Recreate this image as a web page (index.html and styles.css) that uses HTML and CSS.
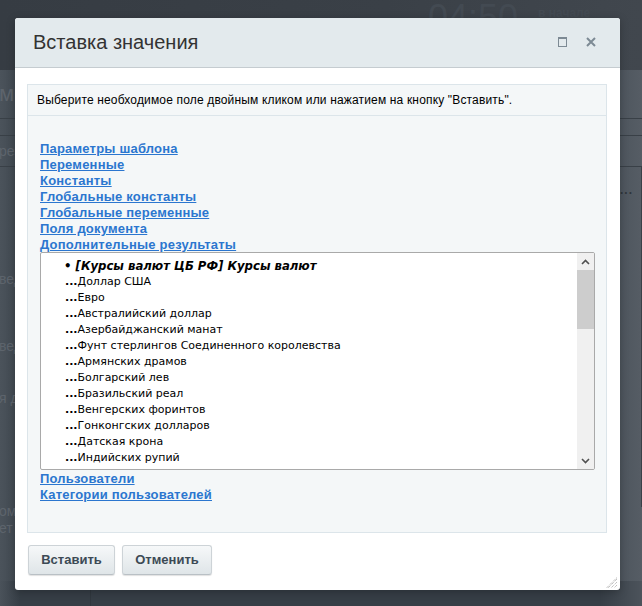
FILE: index.html
```html
<!DOCTYPE html>
<html lang="ru">
<head>
<meta charset="utf-8">
<title>Вставка значения</title>
<link rel="stylesheet" href="styles.css">
</head>
<body>
<div class="bg">
  <div class="bg-top"><span class="bg-clock">04:50</span><span class="bg-begin">в начале</span></div>
  <div class="bg-row r1 lineall"><span class="bg-text big">ме</span></div>
  <div class="bg-row r2 lineall"></div>
  <div class="bg-row r3 lineall"><span class="bg-text">рез</span></div>
  <div class="bg-row r4 lineright"><span class="bg-dots">...</span></div>
  <div class="bg-row r5 lineright"></div>
  <div class="bg-row r6 lineright"></div>
  <div class="bg-row r7 lineright"><span class="bg-text top">вед</span></div>
  <div class="bg-row r8 lineright"></div>
  <div class="bg-row r9 lineright"><span class="bg-text">вед</span></div>
  <div class="bg-row r10 lineright"></div>
  <div class="bg-row r11 lineright"><span class="bg-text top">я д</span></div>
  <div class="bg-row r12 lineright"></div>
  <div class="bg-row r13"><span class="bg-text top two">омл<br>ет</span></div>
  <div class="bg-bottom"><div class="bg-col"></div></div>
</div>

<div class="dialog">
  <div class="dlg-head">
    <span class="dlg-title">Вставка значения</span>
    <span class="dlg-icons">
      <span class="ico-max"></span>
      <svg class="ico-close" width="10" height="10" viewBox="0 0 10 10"><path d="M1 1 L9 9 M9 1 L1 9" stroke="#7d8a94" stroke-width="2" fill="none"/></svg>
    </span>
  </div>
  <div class="dlg-body">
    <div class="box">
      <div class="hint">Выберите необходимое поле двойным кликом или нажатием на кнопку "Вставить".</div>
      <div class="links">
        <a href="#" class="lnk">Параметры шаблона</a>
        <a href="#" class="lnk">Переменные</a>
        <a href="#" class="lnk">Константы</a>
        <a href="#" class="lnk">Глобальные константы</a>
        <a href="#" class="lnk">Глобальные переменные</a>
        <a href="#" class="lnk">Поля документа</a>
        <a href="#" class="lnk">Дополнительные результаты</a>
        <div class="listbox">
          <div class="list">
            <div class="item head">• [Курсы валют ЦБ РФ] Курсы валют</div>
            <div class="item"><b>...</b>Доллар США</div>
            <div class="item"><b>...</b>Евро</div>
            <div class="item"><b>...</b>Австралийский доллар</div>
            <div class="item"><b>...</b>Азербайджанский манат</div>
            <div class="item"><b>...</b>Фунт стерлингов Соединенного королевства</div>
            <div class="item"><b>...</b>Армянских драмов</div>
            <div class="item"><b>...</b>Болгарский лев</div>
            <div class="item"><b>...</b>Бразильский реал</div>
            <div class="item"><b>...</b>Венгерских форинтов</div>
            <div class="item"><b>...</b>Гонконгских долларов</div>
            <div class="item"><b>...</b>Датская крона</div>
            <div class="item"><b>...</b>Индийских рупий</div>
          </div>
          <div class="sbar">
            <div class="sb-arrow"><svg width="9" height="6" viewBox="0 0 9 6"><path d="M1 5 L4.5 1.5 L8 5" stroke="#505050" stroke-width="1.6" fill="none"/></svg></div>
            <div class="sb-thumb"></div>
            <div class="sb-track"></div>
            <div class="sb-arrow"><svg width="9" height="6" viewBox="0 0 9 6"><path d="M1 1 L4.5 4.5 L8 1" stroke="#505050" stroke-width="1.6" fill="none"/></svg></div>
          </div>
        </div>
        <a href="#" class="lnk">Пользователи</a>
        <a href="#" class="lnk">Категории пользователей</a>
      </div>
    </div>
    <div class="buttons">
      <button class="btn b1">Вставить</button>
      <button class="btn b2">Отменить</button>
    </div>
  </div>
  <svg class="grip" width="12" height="12" viewBox="0 0 12 12"><path d="M11 2 L2 11 M11 5 L5 11 M11 8 L8 11 M11 0.5 L0.5 11" stroke="#a8a8a8" stroke-width="1" fill="none" stroke-dasharray="1 1"/></svg>
</div>
</body>
</html>
```

FILE: styles.css
```css
html, body {
  margin: 0;
  padding: 0;
}
body {
  width: 642px;
  height: 606px;
  overflow: hidden;
  font-family: "Liberation Sans", Arial, sans-serif;
  position: relative;
}
.bg {
  height: 606px;
  display: flex;
  flex-direction: column;
  background: linear-gradient(to right, #4b535b 0px, #3f474f 20px, #3f474f 560px, #4a525a 610px, #565d65 642px);
}
.bg-top {
  height: 70px;
  flex: none;
  background: linear-gradient(to right, #363c43, #3a4047 60%, #41474e);
  display: flex;
  align-items: flex-start;
  padding-left: 428px;
  color: #434a52;
}
.bg-clock {
  font-size: 36px;
  line-height: 36px;
  margin-top: 0px;
  font-weight: 300;
}
.bg-begin {
  font-size: 12px;
  font-weight: bold;
  margin-left: 20px;
  margin-top: 6px;
}
.bg-row {
  flex: none;
  display: flex;
  align-items: center;
  position: relative;
}
.lineall { border-bottom: 1px solid #394047; }
.lineright { box-shadow: inset -22px -1px 0 -21px #394047; }
.r1 { height: 48px; }
.r2 { height: 16px; }
.r3 { height: 30px; }
.r4 { height: 45px; }
.r5 { height: 19px; }
.r6 { height: 34px; }
.r7 { height: 44px; }
.r8 { height: 15px; }
.r9 { height: 43px; }
.r10 { height: 17px; }
.r11 { height: 91px; }
.r12 { height: 32px; }
.r13 { height: 74px; }
.bg-text {
  color: #5d646c;
  font-size: 14px;
  font-family: "Liberation Sans", Arial, sans-serif;
  margin-left: -1px;
}
.bg-text.big { font-size: 22px; }
.bg-text.top { align-self: flex-start; margin-top: 6px; }
.bg-text.two { line-height: 17px; margin-top: -4px; }
.bg-dots {
  margin-left: 620px;
  color: #2f353b;
  font-size: 12px;
  font-weight: bold;
  letter-spacing: 1px;
}
.bg-bottom {
  flex: 1;
  background: linear-gradient(to right, #4a525a 0px, #363e46 20px, #363e46 600px, #4c535b 642px);
  display: flex;
}
.bg-col {
  width: 90px;
  border-right: 1px solid #30373e;
}

/* dialog */
.dialog {
  position: absolute;
  left: 15px;
  top: 18px;
  width: 605px;
  height: 572px;
  background: #fff;
  border-radius: 3px;
  display: flex;
  flex-direction: column;
  box-shadow: 0 2px 8px rgba(0,0,0,0.25);
}
.dlg-head {
  height: 49px;
  flex: none;
  background: #e3eaed;
  border-bottom: 1px solid #c5ccd0;
  border-radius: 3px 3px 0 0;
  display: flex;
  align-items: center;
  padding-left: 18px;
  padding-right: 24px;
}
.dlg-title {
  font-size: 20px;
  color: #333;
  flex: 1;
  margin-top: -1px;
}
.dlg-icons {
  display: flex;
  align-items: center;
  gap: 19px;
}
.ico-max {
  width: 7px;
  height: 7px;
  border: 1px solid #7d8a94;
  border-top-width: 2px;
  margin-top: -1px;
}
.ico-close { display: block; margin-top: -1px; }

.dlg-body {
  flex: 1;
  padding: 16px 13px 0 12px;
  display: flex;
  flex-direction: column;
}
.box {
  border: 1px solid #dce5ea;
  background: #f4f7f8;
}
.hint {
  height: 30px;
  border-bottom: 1px solid #dce5ea;
  font-size: 12px;
  letter-spacing: 0.16px;
  color: #000;
  line-height: 30px;
  padding-left: 9px;
}
.links {
  padding: 24px 11px 30px 12px;
  display: flex;
  flex-direction: column;
  align-items: flex-start;
}
.lnk {
  font-size: 13px;
  font-weight: bold;
  letter-spacing: 0.2px;
  color: #2b76cf;
  text-decoration: underline;
  line-height: 18px;
  height: 16px;
}
.listbox {
  align-self: stretch;
  height: 216px;
  border: 1px solid #a9a9a9;
  border-radius: 2px;
  background: #fff;
  display: flex;
  overflow: hidden;
}
.list {
  flex: 1;
  padding: 5px 0 0 24px;
  overflow: hidden;
  font-family: "DejaVu Sans", Verdana, sans-serif;
  font-size: 11px;
  color: #000;
}
.item {
  height: 16px;
  line-height: 16px;
  white-space: nowrap;
}
.item b { font-weight: bold; }
.item.head {
  font-weight: bold;
  font-style: italic;
  font-size: 11.7px;
  margin-left: -1px;
}
.sbar {
  width: 17px;
  flex: none;
  background: #f0f0f0;
  display: flex;
  flex-direction: column;
}
.sb-arrow {
  height: 17px;
  display: flex;
  align-items: center;
  justify-content: center;
}
.sb-thumb {
  height: 59px;
  background: #cdcdcd;
}
.sb-track { flex: 1; }

.buttons {
  display: flex;
  gap: 7px;
  margin-top: 12px;
  padding-left: 1px;
}
.btn {
  height: 30px;
  border: 1px solid #cdd3d7;
  border-bottom-color: #b9c0c5;
  border-radius: 3px;
  background: linear-gradient(to bottom, #f6f8f9, #dfe5e8);
  box-shadow: 0 1px 1px rgba(0,0,0,0.12);
  font-family: "Liberation Sans", Arial, sans-serif;
  font-size: 13px;
  font-weight: bold;
  color: #3c4a55;
  padding: 0 0 1px 0;
  cursor: pointer;
}
.b1 { width: 87px; }
.b2 { width: 90px; }
.grip {
  position: absolute;
  right: 2px;
  bottom: 1px;
}
```
